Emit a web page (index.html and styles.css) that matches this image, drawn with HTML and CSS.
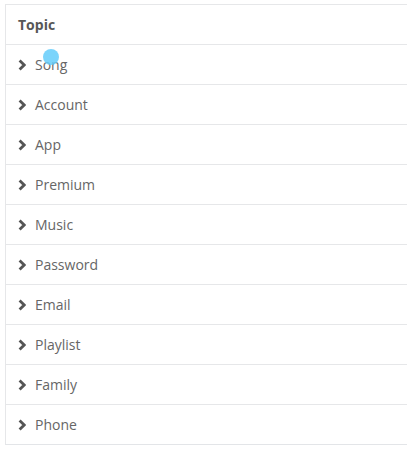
FILE: index.html
```html
<!DOCTYPE html>
<html>
<head>
<meta charset="utf-8">
<link rel="stylesheet" href="styles.css">
</head>
<body>
<div class="table">
  <div class="row head">Topic</div>
  <div class="row"><svg class="chev" viewBox="0 0 8 12"><path d="M1.6 1.4 L6.2 6 L1.6 10.6" /></svg><span>Song</span></div>
  <div class="row"><svg class="chev" viewBox="0 0 8 12"><path d="M1.6 1.4 L6.2 6 L1.6 10.6" /></svg><span>Account</span></div>
  <div class="row"><svg class="chev" viewBox="0 0 8 12"><path d="M1.6 1.4 L6.2 6 L1.6 10.6" /></svg><span>App</span></div>
  <div class="row"><svg class="chev" viewBox="0 0 8 12"><path d="M1.6 1.4 L6.2 6 L1.6 10.6" /></svg><span>Premium</span></div>
  <div class="row"><svg class="chev" viewBox="0 0 8 12"><path d="M1.6 1.4 L6.2 6 L1.6 10.6" /></svg><span>Music</span></div>
  <div class="row"><svg class="chev" viewBox="0 0 8 12"><path d="M1.6 1.4 L6.2 6 L1.6 10.6" /></svg><span>Password</span></div>
  <div class="row"><svg class="chev" viewBox="0 0 8 12"><path d="M1.6 1.4 L6.2 6 L1.6 10.6" /></svg><span>Email</span></div>
  <div class="row"><svg class="chev" viewBox="0 0 8 12"><path d="M1.6 1.4 L6.2 6 L1.6 10.6" /></svg><span>Playlist</span></div>
  <div class="row"><svg class="chev" viewBox="0 0 8 12"><path d="M1.6 1.4 L6.2 6 L1.6 10.6" /></svg><span>Family</span></div>
  <div class="row"><svg class="chev" viewBox="0 0 8 12"><path d="M1.6 1.4 L6.2 6 L1.6 10.6" /></svg><span>Phone</span></div>
</div>
<div class="touch"></div>
</body>
</html>
```
FILE: styles.css
```css
html, body { margin: 0; padding: 0; background: #fff; overflow: hidden; }
body { padding: 4px 0 0 5px; font-family: "Open Sans", sans-serif; font-size: 14px; color: #666; }
.table { width: 412px; border: 1px solid #e6e7e9; border-bottom-color: #e3e5e8; box-sizing: border-box; }
.row { height: 40px; box-sizing: border-box; border-top: 1px solid #e6e7e9; display: flex; align-items: center; padding-left: 12px; gap: 9px; }
.row:first-child { border-top: none; height: 39px; }
.head { font-weight: 700; color: #575757; }
.chev { width: 8px; height: 12px; fill: none; stroke: #555; stroke-width: 2.8; stroke-linecap: butt; stroke-linejoin: miter; }
.touch { position: absolute; left: 43px; top: 49px; width: 16px; height: 16px; border-radius: 50%; background: rgba(100, 205, 250, 0.85); }
```
